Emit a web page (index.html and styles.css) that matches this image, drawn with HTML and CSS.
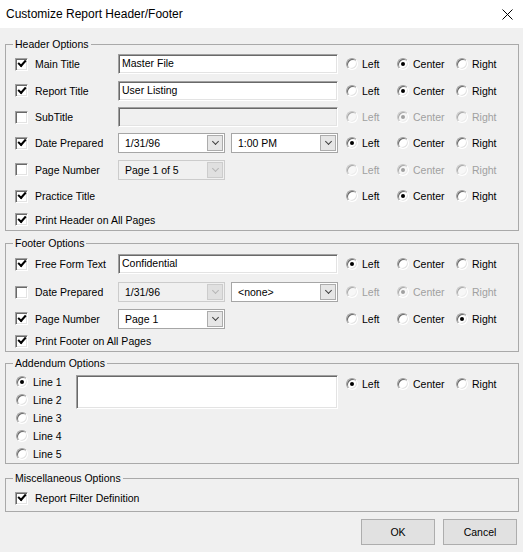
FILE: index.html
```html
<!DOCTYPE html>
<html>
<head>
<meta charset="utf-8">
<title>Customize Report Header/Footer</title>
<link rel="stylesheet" href="styles.css">
</head>
<body>
<div class="titlebar">
  <span class="title">Customize Report Header/Footer</span>
  <svg class="close" width="11" height="11" viewBox="0 0 11 11"><path d="M0.5 0.5 L10.5 10.5 M10.5 0.5 L0.5 10.5" stroke="#000" stroke-width="1" fill="none"/></svg>
</div>
<div class="content">
  <fieldset class="group g-header">
    <legend>Header Options</legend>
    <div class="row h26">
      <div class="chk"><span class="box on"></span>Main Title</div>
      <div class="input">Master File</div>
      <div class="radios"><div class="rad l"><span class="circle"></span>Left</div><div class="rad c"><span class="circle on"></span>Center</div><div class="rad"><span class="circle"></span>Right</div></div>
    </div>
    <div class="row h27">
      <div class="chk"><span class="box on"></span>Report Title</div>
      <div class="input">User Listing</div>
      <div class="radios"><div class="rad l"><span class="circle"></span>Left</div><div class="rad c"><span class="circle on"></span>Center</div><div class="rad"><span class="circle"></span>Right</div></div>
    </div>
    <div class="row h26">
      <div class="chk"><span class="box"></span>SubTitle</div>
      <div class="input dis"></div>
      <div class="radios dis"><div class="rad l"><span class="circle"></span>Left</div><div class="rad c"><span class="circle on"></span>Center</div><div class="rad"><span class="circle"></span>Right</div></div>
    </div>
    <div class="row h26">
      <div class="chk"><span class="box on"></span>Date Prepared</div>
      <div class="pair">
        <div class="combo"><span class="txt">1/31/96</span><span class="drop"></span></div>
        <div class="combo"><span class="txt">1:00 PM</span><span class="drop"></span></div>
      </div>
      <div class="radios"><div class="rad l"><span class="circle on"></span>Left</div><div class="rad c"><span class="circle"></span>Center</div><div class="rad"><span class="circle"></span>Right</div></div>
    </div>
    <div class="row h27">
      <div class="chk"><span class="box"></span>Page Number</div>
      <div class="pair">
        <div class="combo dis"><span class="txt">Page 1 of 5</span><span class="drop"></span></div>
      </div>
      <div class="radios dis"><div class="rad l"><span class="circle"></span>Left</div><div class="rad c"><span class="circle on"></span>Center</div><div class="rad"><span class="circle"></span>Right</div></div>
    </div>
    <div class="row h26">
      <div class="chk"><span class="box on"></span>Practice Title</div>
      <div></div>
      <div class="radios"><div class="rad l"><span class="circle"></span>Left</div><div class="rad c"><span class="circle on"></span>Center</div><div class="rad"><span class="circle"></span>Right</div></div>
    </div>
    <div class="row h21">
      <div class="chk span"><span class="box on"></span>Print Header on All Pages</div>
    </div>
  </fieldset>

  <fieldset class="group">
    <legend>Footer Options</legend>
    <div class="row h28">
      <div class="chk"><span class="box on"></span>Free Form Text</div>
      <div class="input">Confidential</div>
      <div class="radios"><div class="rad l"><span class="circle on"></span>Left</div><div class="rad c"><span class="circle"></span>Center</div><div class="rad"><span class="circle"></span>Right</div></div>
    </div>
    <div class="row h28">
      <div class="chk"><span class="box"></span>Date Prepared</div>
      <div class="pair">
        <div class="combo dis"><span class="txt">1/31/96</span><span class="drop"></span></div>
        <div class="combo"><span class="txt">&lt;none&gt;</span><span class="drop"></span></div>
      </div>
      <div class="radios dis"><div class="rad l"><span class="circle"></span>Left</div><div class="rad c"><span class="circle on"></span>Center</div><div class="rad"><span class="circle"></span>Right</div></div>
    </div>
    <div class="row h25">
      <div class="chk"><span class="box on"></span>Page Number</div>
      <div class="pair">
        <div class="combo"><span class="txt">Page 1</span><span class="drop"></span></div>
      </div>
      <div class="radios"><div class="rad l"><span class="circle"></span>Left</div><div class="rad c"><span class="circle"></span>Center</div><div class="rad"><span class="circle on"></span>Right</div></div>
    </div>
    <div class="row h20">
      <div class="chk span"><span class="box on"></span>Print Footer on All Pages</div>
    </div>
  </fieldset>

  <fieldset class="group g-add">
    <legend>Addendum Options</legend>
    <div class="add">
      <div class="lines">
        <div class="line"><span class="circle on"></span>Line 1</div>
        <div class="line"><span class="circle"></span>Line 2</div>
        <div class="line"><span class="circle"></span>Line 3</div>
        <div class="line"><span class="circle"></span>Line 4</div>
        <div class="line"><span class="circle"></span>Line 5</div>
      </div>
      <div class="input area"></div>
      <div class="radios top"><div class="rad l"><span class="circle on"></span>Left</div><div class="rad c"><span class="circle"></span>Center</div><div class="rad"><span class="circle"></span>Right</div></div>
    </div>
  </fieldset>

  <fieldset class="group g-misc">
    <legend>Miscellaneous Options</legend>
    <div class="row h26">
      <div class="chk span"><span class="box on"></span>Report Filter Definition</div>
    </div>
  </fieldset>

  <div class="buttons">
    <div class="push">OK</div>
    <div class="push">Cancel</div>
  </div>
</div>
</body>
</html>
```
FILE: styles.css
```css
* { box-sizing: border-box; }
html, body { margin: 0; padding: 0; }
body {
  width: 523px;
  height: 552px;
  overflow: hidden;
  background: #f0f0f0;
  font-family: "Liberation Sans", Arial, sans-serif;
  font-size: 10.5px;
  color: #000;
}
.titlebar {
  height: 28px;
  background: #fff;
  display: flex;
  align-items: center;
  justify-content: space-between;
  padding: 0 10px 0 6px;
  font-size: 12px;
}
.close { display: block; }
.content { padding: 0 4px 0 5px; }

.group {
  border: 1px solid #a9a9a9;
  margin: 6px 0 0 0;
  padding: 0 8px 0 9px;
  min-width: 0;
}
.group legend {
  padding: 0 2px;
  margin-left: -2px;
  line-height: 13px;
}
.g-header { margin-top: 10px; }
.g-add { margin-top: 5px; }
.g-misc { margin-top: 8px; }

.row {
  display: grid;
  grid-template-columns: 103px 220px 1fr;
  align-items: center;
  height: 26px;
}
.h20 { height: 20px; }
.h21 { height: 21px; }
.h25 { height: 25px; }
.h27 { height: 27px; }
.h28 { height: 28px; }

.chk { display: flex; align-items: center; white-space: nowrap; }
.chk.span { grid-column: 1 / -1; }
.box {
  flex: none;
  width: 13px;
  height: 13px;
  margin-right: 7px;
  background: #fff;
  border: 1px solid;
  border-color: #a0a0a0 #fff #fff #a0a0a0;
  box-shadow: inset 1px 1px 0 #696969, inset -1px -1px 0 #e3e3e3;
  position: relative;
}
.box.on::after {
  content: "";
  position: absolute;
  left: 2px;
  top: 1.5px;
  width: 6px;
  height: 3px;
  border-left: 2px solid #000;
  border-bottom: 2px solid #000;
  transform: rotate(-48deg);
}

.input {
  height: 20px;
  background: #fff;
  border: 1px solid;
  border-color: #a0a0a0 #fff #fff #a0a0a0;
  box-shadow: inset 1px 1px 0 #696969, inset -1px -1px 0 #e3e3e3;
  padding: 0 3px;
  line-height: 17px;
  white-space: nowrap;
}
.input.dis { background: #f0f0f0; }

.pair { display: flex; gap: 6px; }
.combo {
  width: 107px;
  height: 20px;
  border: 1px solid #a6a6a6;
  background: #fff;
  display: flex;
  align-items: center;
  padding-left: 6px;
}
.combo .txt { flex: 1; white-space: nowrap; }
.combo .drop {
  flex: none;
  width: 16px;
  height: 16px;
  margin-right: 1px;
  background: #e6e6e6;
  border: 1px solid #acacac;
  position: relative;
}
.combo .drop::after {
  content: "";
  position: absolute;
  left: 4.5px;
  top: 3px;
  width: 4px;
  height: 4px;
  border-right: 1px solid #404040;
  border-bottom: 1px solid #404040;
  transform: rotate(45deg);
}
.combo.dis { background: #f0f0f0; border-color: #cccccc; }
.combo.dis .drop { background: #e0e0e0; border-color: #cccccc; }
.combo.dis .drop::after { border-color: #b5b5b5; }

.radios { display: flex; align-items: center; padding-left: 8px; white-space: nowrap; }
.radios.top { height: 22px; align-self: flex-start; }
.rad { display: flex; align-items: center; }
.rad.l { width: 51px; }
.rad.c { width: 59px; }
.circle {
  flex: none;
  width: 12px;
  height: 12px;
  margin-right: 4px;
  border-radius: 50%;
  background: #fff;
  border: 1px solid;
  border-color: #a0a0a0 #fff #fff #a0a0a0;
  box-shadow: inset 1px 1px 0 #696969, inset -1px -1px 0 #e3e3e3;
  position: relative;
}
.circle.on::after {
  content: "";
  position: absolute;
  left: 3px;
  top: 3px;
  width: 4px;
  height: 4px;
  border-radius: 50%;
  background: #000;
}
.radios.dis { color: #a0a0a0; }
.radios.dis .circle {
  border-color: #c8c8c8 #fff #fff #c8c8c8;
  box-shadow: inset 1px 1px 0 #a8a8a8, inset -1px -1px 0 #ececec;
  background: #f7f7f7;
}
.radios.dis .circle.on::after { background: #a0a0a0; }

.add { display: flex; padding-top: 3px; padding-bottom: 0; }
.lines { width: 61px; flex: none; }
.line { height: 18px; display: flex; align-items: center; }
.line .circle { margin-left: 1px; margin-right: 5px; }
.input.area { width: 262px; height: 34px; margin-top: 2px; flex: none; }

.buttons {
  display: flex;
  justify-content: flex-end;
  gap: 8px;
  padding: 7px 2px 0 0;
}
.push {
  width: 74px;
  height: 26px;
  border: 1px solid #adadad;
  background: #e1e1e1;
  display: flex;
  align-items: center;
  justify-content: center;
}
```
